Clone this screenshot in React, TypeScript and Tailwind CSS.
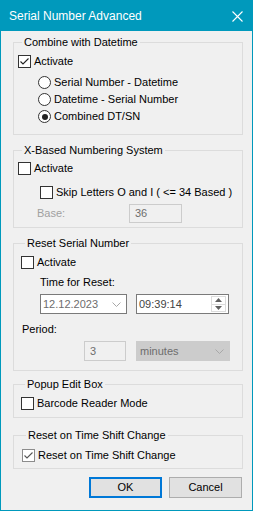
const Check = ({ checked = false, soft = false }: { checked?: boolean; soft?: boolean }) => (
    <span
        className={`w-[13px] h-[13px] shrink-0 border bg-white flex items-center justify-center ${soft ? "border-[#8c8c8c]" : "border-[#333333]"}`}
    >
        {checked && (
            <svg width="11" height="11" viewBox="0 0 11 11">
                <path d="M1.5 5.5 L4 8 L9.5 2.5" fill="none" stroke={soft ? "#555555" : "#222222"} strokeWidth="1.1" />
            </svg>
        )}
    </span>
);

const Radio = ({ checked = false }: { checked?: boolean }) => (
    <span className="w-[13px] h-[13px] shrink-0 rounded-full border border-[#333333] bg-white flex items-center justify-center">
        {checked && <span className="w-[6px] h-[6px] rounded-full bg-[#222222]" />}
    </span>
);

const Chevron = ({ color }: { color: string }) => (
    <svg width="9" height="5" viewBox="0 0 9 5">
        <path d="M0.5 0.5 L4.5 4.5 L8.5 0.5" fill="none" stroke={color} strokeWidth="1" />
    </svg>
);

const App = () => {
    return (
        <div className="w-[253px] h-[511px] bg-[#0099bc] p-px font-['Liberation_Sans',Arial,sans-serif] text-[11px] text-black">
            <div className="h-[30px] flex items-center justify-between pl-[8px] pr-[9px] text-white">
                <span className="text-[12px]">Serial Number Advanced</span>
                <svg width="11" height="11" viewBox="0 0 11 11">
                    <path d="M0.5 0.5 L10.5 10.5 M10.5 0.5 L0.5 10.5" stroke="#ffffff" strokeWidth="1.1" />
                </svg>
            </div>

            <div className="h-[479px] bg-[#f0f0f0] pl-[12px] pr-[9px] flex flex-col">
                {/* Combine with Datetime */}
                <fieldset className="mt-[5px] h-[99px] border border-[#dcdcdc] pl-[4px]">
                    <legend className="ml-[4px] px-[2px] leading-[13px]">Combine with Datetime</legend>
                    <div className="pt-[4px] flex flex-col">
                        <label className="h-[17px] flex items-center gap-[3px]">
                            <Check checked />
                            <span>Activate</span>
                        </label>
                        <div className="mt-[4px] ml-[20px] flex flex-col">
                            <label className="h-[17px] flex items-center gap-[3px]">
                                <Radio />
                                <span>Serial Number - Datetime</span>
                            </label>
                            <label className="h-[17px] flex items-center gap-[3px]">
                                <Radio />
                                <span>Datetime - Serial Number</span>
                            </label>
                            <label className="h-[17px] flex items-center gap-[3px]">
                                <Radio checked />
                                <span>Combined DT/SN</span>
                            </label>
                        </div>
                    </div>
                </fieldset>

                {/* X-Based Numbering System */}
                <fieldset className="mt-[9px] h-[84px] border border-[#dcdcdc] pl-[4px]">
                    <legend className="ml-[4px] px-[2px] leading-[13px]">X-Based Numbering System</legend>
                    <div className="pt-[3px] flex flex-col">
                        <label className="h-[17px] flex items-center gap-[3px]">
                            <Check />
                            <span>Activate</span>
                        </label>
                        <label className="mt-[7px] ml-[22px] h-[17px] flex items-center gap-[3px]">
                            <Check />
                            <span>Skip Letters O and I ( &lt;= 34 Based )</span>
                        </label>
                        <div className="mt-[3px] h-[19px] flex items-center">
                            <span className="ml-[19px] w-[92px] text-[#a0a0a0]">Base:</span>
                            <div className="w-[53px] h-[19px] border border-[#cccccc] bg-[#f0f0f0] flex items-center pl-[5px] text-[#6d6d6d]">
                                36
                            </div>
                        </div>
                    </div>
                </fieldset>

                {/* Reset Serial Number */}
                <fieldset className="mt-[9px] h-[134px] border border-[#dcdcdc] pl-[7px]">
                    <legend className="ml-[4px] px-[2px] leading-[13px]">Reset Serial Number</legend>
                    <div className="pt-[4px] flex flex-col">
                        <label className="h-[17px] flex items-center gap-[3px]">
                            <Check />
                            <span>Activate</span>
                        </label>
                        <div className="mt-[4px] ml-[19px] h-[14px] flex items-center">Time for Reset:</div>
                        <div className="mt-[5px] ml-[19px] flex gap-[9px]">
                            <div className="w-[87px] h-[20px] border border-[#7a7a7a] bg-white flex items-center justify-between pl-[2px] pr-[5px] text-[#6d6d6d]">
                                <span>12.12.2023</span>
                                <Chevron color="#a8a8a8" />
                            </div>
                            <div className="w-[93px] h-[20px] border border-[#7a7a7a] bg-white flex items-center justify-between pl-[2px] pr-[2px] text-[#444444]">
                                <span>09:39:14</span>
                                <div className="w-[15px] h-[16px] flex flex-col border border-[#dcdcdc]">
                                    <div className="flex-1 flex items-center justify-center border-b border-[#dcdcdc]">
                                        <svg width="7" height="4" viewBox="0 0 7 4">
                                            <path d="M0 4 L3.5 0 L7 4 Z" fill="#606060" />
                                        </svg>
                                    </div>
                                    <div className="flex-1 flex items-center justify-center">
                                        <svg width="7" height="4" viewBox="0 0 7 4">
                                            <path d="M0 0 L3.5 4 L7 0 Z" fill="#606060" />
                                        </svg>
                                    </div>
                                </div>
                            </div>
                        </div>
                        <div className="mt-[8px] ml-[1px] h-[14px] flex items-center">Period:</div>
                        <div className="mt-[5px] ml-[63px] flex gap-[10px]">
                            <div className="w-[42px] h-[20px] border border-[#cccccc] bg-[#f0f0f0] flex items-center pl-[5px] text-[#6d6d6d]">
                                3
                            </div>
                            <div className="w-[94px] h-[20px] border border-[#cccccc] bg-[#cccccc] flex items-center justify-between pl-[3px] pr-[5px] text-[#6d6d6d]">
                                <span>minutes</span>
                                <Chevron color="#a8a8a8" />
                            </div>
                        </div>
                    </div>
                </fieldset>

                {/* Popup Edit Box */}
                <fieldset className="mt-[7px] h-[40px] border border-[#dcdcdc] pl-[7px]">
                    <legend className="ml-[4px] px-[2px] leading-[13px]">Popup Edit Box</legend>
                    <label className="mt-[4px] h-[17px] flex items-center gap-[3px]">
                        <Check />
                        <span>Barcode Reader Mode</span>
                    </label>
                </fieldset>

                {/* Reset on Time Shift Change */}
                <fieldset className="mt-[11px] h-[40px] border border-[#dcdcdc] pl-[8px]">
                    <legend className="ml-[4px] px-[2px] leading-[13px]">Reset on Time Shift Change</legend>
                    <label className="mt-[5px] h-[17px] flex items-center gap-[3px]">
                        <Check checked soft />
                        <span>Reset on Time Shift Change</span>
                    </label>
                </fieldset>

                <div className="mt-[8px] pr-[1px] flex justify-end gap-[7px]">
                    <button className="w-[73px] h-[21px] border-2 border-[#0078d7] bg-[#e1e1e1] flex items-center justify-center">
                        OK
                    </button>
                    <button className="w-[73px] h-[21px] border border-[#adadad] bg-[#e1e1e1] flex items-center justify-center">
                        Cancel
                    </button>
                </div>
            </div>
        </div>
    );
};

export default App;
